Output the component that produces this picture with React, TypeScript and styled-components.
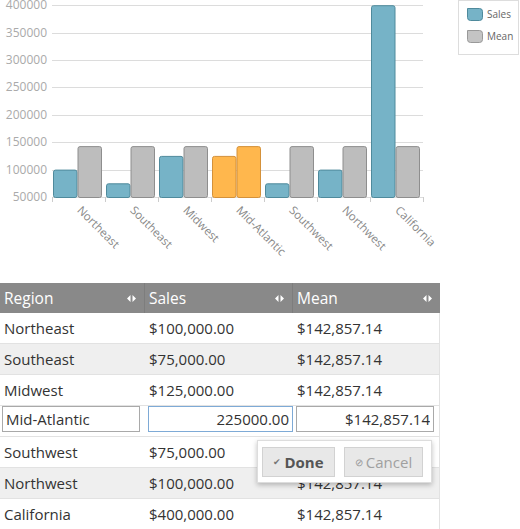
import { createGlobalStyle, styled } from 'styled-components'

type Region = {
  name: string
  sales: number
}

const MEAN = 142857.14

const regions: Region[] = [
  { name: 'Northeast', sales: 100000 },
  { name: 'Southeast', sales: 75000 },
  { name: 'Midwest', sales: 125000 },
  { name: 'Mid-Atlantic', sales: 125000 },
  { name: 'Southwest', sales: 75000 },
  { name: 'Northwest', sales: 100000 },
  { name: 'California', sales: 400000 },
]

const EDIT_INDEX = 3

const PLOT_LEFT = 52
const PLOT_RIGHT = 423
const BASE_Y = 197
const GROUP_W = (PLOT_RIGHT - PLOT_LEFT) / regions.length
const BAR_W = 24.5

const toY = (v: number) => BASE_Y - ((v - 50000) * 27.4) / 50000

const money = (v: number) =>
  '$' + v.toLocaleString('en-US', { minimumFractionDigits: 2, maximumFractionDigits: 2 })

const GlobalStyle = createGlobalStyle`
  html, body {
    margin: 0;
    padding: 0;
    background: #fff;
  }
  body {
    font-family: 'Open Sans', 'Noto Sans', sans-serif;
    color: #333;
  }
`

const Bar = ({ x, value, fill, stroke }: { x: number; value: number; fill: string; stroke: string }) => {
  const top = toY(value)
  return (
    <rect x={x + 0.5} y={top + 0.5} width={BAR_W - 1} height={BASE_Y - top} rx={2} fill={fill} stroke={stroke} />
  )
}

const Chart = () => {
  const ticks = [400000, 350000, 300000, 250000, 200000, 150000, 100000, 50000]
  return (
    <ChartSvg width={440} height={283} viewBox="0 0 440 283">
      {ticks.map((t) => (
        <g key={t}>
          <line x1={PLOT_LEFT} x2={PLOT_RIGHT} y1={Math.round(toY(t)) + 0.5} y2={Math.round(toY(t)) + 0.5} stroke="#dcdcdc" />
          <text x={47} y={toY(t) + 4} textAnchor="end" fontSize={12} fill="#aaa">
            {t}
          </text>
        </g>
      ))}
      {regions.map((r, i) => {
        const gx = PLOT_LEFT + i * GROUP_W
        const hot = i === EDIT_INDEX
        const lx = gx + GROUP_W / 2 - 2
        const ly = 211
        return (
          <g key={r.name}>
            <line x1={Math.round(gx) + 0.5} x2={Math.round(gx) + 0.5} y1={BASE_Y} y2={BASE_Y + 5} stroke="#ccc" />
            <Bar x={gx + 1} value={r.sales} fill={hot ? '#ffb74d' : '#76b3c7'} stroke={hot ? '#d4913a' : '#4f8a9c'} />
            <Bar x={gx + 1 + BAR_W} value={MEAN} fill={hot ? '#ffb74d' : '#bdbdbd'} stroke={hot ? '#d4913a' : '#8e8e8e'} />
            <text x={lx} y={ly} fontSize={11.5} fill="#888" transform={`rotate(45 ${lx} ${ly})`}>
              {r.name}
            </text>
          </g>
        )
      })}
      <line x1={PLOT_RIGHT + 0.5} x2={PLOT_RIGHT + 0.5} y1={BASE_Y} y2={BASE_Y + 5} stroke="#ccc" />
    </ChartSvg>
  )
}

const Swatch = ({ color, stroke }: { color: string; stroke: string }) => (
  <svg width={16} height={13} viewBox="0 0 16 13">
    <path d="M0.5 0.5 H12.5 Q15.5 0.5 15.5 3.5 V9.5 Q15.5 12.5 12.5 12.5 H3.5 Q0.5 12.5 0.5 9.5 Z" fill={color} stroke={stroke} />
  </svg>
)

const ResizeIcon = () => (
  <svg width={9} height={7} viewBox="0 0 9 7">
    <path d="M0 3.5 L3.5 0 V7 Z M9 3.5 L5.5 0 V7 Z" fill="#fff" />
  </svg>
)

const App = () => {
  return (
    <>
      <GlobalStyle />
      <Page>
        <ChartRow>
          <Chart />
          <Legend>
            <LegendItem>
              <Swatch color="#76b3c7" stroke="#4f8a9c" />
              Sales
            </LegendItem>
            <LegendItem>
              <Swatch color="#c4c4c4" stroke="#999" />
              Mean
            </LegendItem>
          </Legend>
        </ChartRow>
        <Grid>
          <HeaderCell>
            Region
            <ResizeIcon />
          </HeaderCell>
          <HeaderCell>
            Sales
            <ResizeIcon />
          </HeaderCell>
          <HeaderCell $last>
            Mean
            <ResizeIcon />
          </HeaderCell>
          {regions.map((r, i) =>
            i === EDIT_INDEX ? (
              <EditRow key={r.name}>
                <EditInput defaultValue="Mid-Atlantic" />
                <EditInput $focused $right defaultValue="225000.00" />
                <EditInput $right defaultValue={money(MEAN)} />
              </EditRow>
            ) : (
              <Row key={r.name} $alt={i % 2 === 1}>
                <Cell>{r.name}</Cell>
                <Cell>{money(r.sales)}</Cell>
                <Cell>{money(MEAN)}</Cell>
              </Row>
            ),
          )}
          <Popup>
            <DoneButton>
              <CheckMark>✔</CheckMark>Done
            </DoneButton>
            <CancelButton>
              <CancelIcon>⊘</CancelIcon>Cancel
            </CancelButton>
          </Popup>
        </Grid>
      </Page>
    </>
  )
}

const Page = styled.div`
  width: 520px;
  height: 529px;
  overflow: hidden;
`

const ChartRow = styled.div`
  display: flex;
  align-items: flex-start;
  height: 283px;
`

const ChartSvg = styled.svg`
  display: block;
  font-family: 'Open Sans', sans-serif;
`

const Legend = styled.div`
  margin-left: 18px;
  width: 61px;
  height: 55px;
  border: 1px solid #ddd;
  box-sizing: border-box;
  padding: 7px 0 0 8px;
  display: flex;
  flex-direction: column;
  gap: 9px;
`

const LegendItem = styled.div`
  display: flex;
  align-items: center;
  gap: 4px;
  font-size: 10px;
  line-height: 13px;
  color: #666;
`

const Grid = styled.div`
  position: relative;
  width: 440px;
  display: grid;
  grid-template-columns: 145px 148px 147px;
`

const HeaderCell = styled.div<{ $last?: boolean }>`
  height: 30px;
  background: #898989;
  color: #fff;
  font-size: 15.5px;
  display: flex;
  align-items: center;
  justify-content: space-between;
  padding: 0 8px 0 4px;
  box-sizing: border-box;
  border-right: ${({ $last }) => ($last ? 'none' : '1px solid #7d7d7d')};
`

const Row = styled.div<{ $alt?: boolean }>`
  display: contents;
  & > div {
    background: ${({ $alt }) => ($alt ? '#efefef' : '#fff')};
  }
`

const Cell = styled.div`
  height: 31px;
  box-sizing: border-box;
  border-bottom: 1px solid #e2e2e2;
  padding: 0 4px;
  font-size: 15px;
  line-height: 30px;
  color: #333;
  white-space: nowrap;
  &:nth-child(3n) {
    border-right: 1px solid #e2e2e2;
  }
`

const EditRow = styled.div`
  grid-column: 1 / -1;
  height: 31px;
  box-sizing: border-box;
  border-bottom: 1px solid #e2e2e2;
  border-right: 1px solid #e2e2e2;
  display: grid;
  grid-template-columns: 145px 148px 147px;
  align-items: center;
  padding-top: 1px;
`

const EditInput = styled.input<{ $focused?: boolean; $right?: boolean }>`
  height: 26px;
  width: 138px;
  box-sizing: border-box;
  margin-left: ${({ $right }) => ($right ? '3px' : '2px')};
  margin-top: -5px;
  border: 1px solid ${({ $focused }) => ($focused ? '#7eaad6' : '#a9a9a9')};
  outline: none;
  padding: 0 3px;
  font-family: 'Open Sans', sans-serif;
  font-size: 15px;
  color: #333;
  text-align: ${({ $right }) => ($right ? 'right' : 'left')};
  &:nth-child(2) {
    width: 145px;
  }
`

const Popup = styled.div`
  position: absolute;
  left: 257px;
  top: 157px;
  width: 175px;
  height: 43px;
  box-sizing: border-box;
  background: #fff;
  border: 1px solid #ddd;
  box-shadow: 0 2px 5px rgba(0, 0, 0, 0.25);
  display: flex;
  align-items: center;
  gap: 9px;
  padding-left: 4px;
`

const PopupButton = styled.div`
  height: 30px;
  box-sizing: border-box;
  background: #e8e8e8;
  border: 1px solid #d2d2d2;
  display: flex;
  align-items: center;
  justify-content: center;
  gap: 3px;
  font-size: 15px;
`

const DoneButton = styled(PopupButton)`
  width: 73px;
  font-weight: 700;
  color: #555;
`

const CancelButton = styled(PopupButton)`
  width: 79px;
  color: #a0a0a0;
`

const CheckMark = styled.span`
  font-size: 9px;
  color: #777;
  font-weight: 400;
`

const CancelIcon = styled.span`
  font-size: 10px;
  color: #999;
`

export default App
